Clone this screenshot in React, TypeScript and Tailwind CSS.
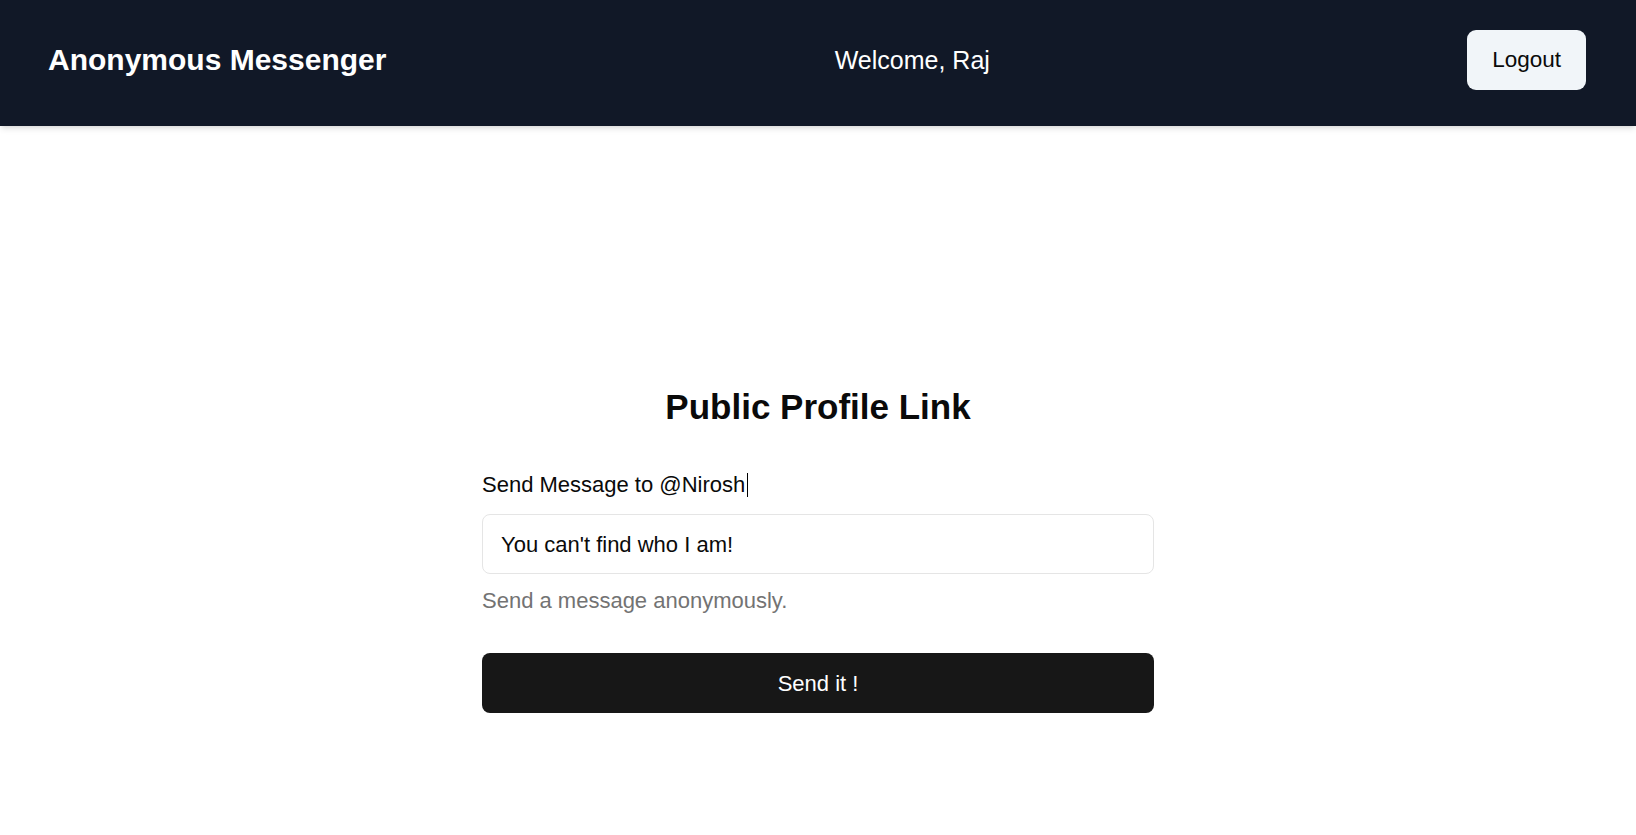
import React from 'react'

const Navbar: React.FC = () => {
  return (
    <header className="h-[126px] bg-[#111827] shadow-md px-[48px] pt-[30px] pb-[36px] flex items-center justify-between text-white">
      <a className="text-[30px] font-bold leading-[36px]">Anonymous Messenger</a>
      <span className="text-[25px] leading-[32px] mr-[29px]">Welcome, Raj</span>
      <button className="h-[60px] px-[25px] rounded-[9px] bg-[#f1f5f9] text-[#0a0a0a] text-[22.5px] mr-[2px]">
        Logout
      </button>
    </header>
  )
}

const App: React.FC = () => {
  return (
    <div className="min-h-screen bg-white font-['Liberation_Sans',Arial,sans-serif] text-[#0a0a0a]">
      <Navbar />
      <main className="pt-[260px] flex flex-col items-center">
        <h1 className="text-[35px] font-bold leading-[42px]">Public Profile Link</h1>
        <form className="w-[672px] mt-[43px] flex flex-col" onSubmit={(e) => e.preventDefault()}>
          <label className="text-[22px] leading-[28px] flex items-center">
            Send Message to @Nirosh
            <span className="inline-block w-px h-[24px] bg-black ml-[2px]"></span>
          </label>
          <div className="mt-[15px] h-[60px] border border-[#e5e5e5] rounded-[8px] px-[18px] flex items-center text-[22px]">
            You can't find who I am!
          </div>
          <p className="mt-[13px] text-[22px] leading-[28px] text-[#737373]">Send a message anonymously.</p>
          <button
            type="submit"
            className="mt-[38px] h-[60px] rounded-[8px] bg-[#171717] text-white text-[22px]"
          >
            Send it !
          </button>
        </form>
      </main>
    </div>
  )
}

export default App
